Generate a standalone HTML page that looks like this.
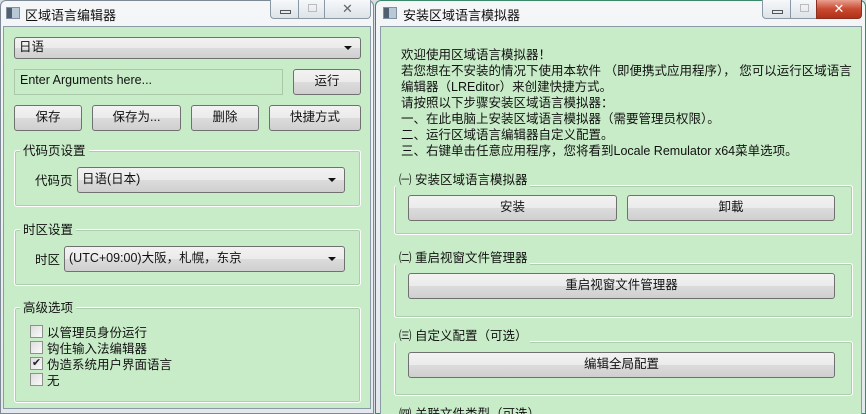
<!DOCTYPE html>
<html><head><meta charset="utf-8"><style>
*{box-sizing:border-box;margin:0;padding:0}
html,body{width:866px;height:414px;overflow:hidden}
body{background:#d8dde4;position:relative;font-family:"Liberation Sans","Noto Sans CJK SC",sans-serif;font-size:12.5px;color:#111}
#wrap{position:absolute;left:0;top:0;width:866px;height:414px;overflow:hidden}
.a{position:absolute}
.win{position:absolute;background:linear-gradient(#f4f6f8,#e4e8ec);border:1px solid #7d8a96;border-radius:6px 6px 0 0}
.client{position:absolute;background:#c8ecc8;border:1px solid #8a9aa6}
.title{position:absolute;top:5px;font-size:13px;white-space:nowrap}
.ico{position:absolute;top:7px;width:14px;height:12px;background:linear-gradient(90deg,#506070 0 40%,#b8c8d4 40%);border:1px solid #8090a0}
.btn{position:absolute;border:1px solid #707070;border-radius:3px;background:linear-gradient(#f2f2f2 0,#ebebeb 50%,#dcdcdc 50%,#cfcfcf 100%);text-align:center;white-space:nowrap}
.combo{position:absolute;border:1px solid #707070;border-radius:3px;background:linear-gradient(#f2f2f2 0,#ebebeb 50%,#dcdcdc 50%,#cfcfcf 100%);padding-left:4px;white-space:nowrap}
.combo:after{content:"";position:absolute;right:8px;top:50%;margin-top:-2px;border-left:4px solid transparent;border-right:4px solid transparent;border-top:4px solid #111}
.grp{position:absolute;border:1px solid #fff;border-radius:3px;box-shadow:inset 0 0 0 1px #b0ccb0}
.gl{position:absolute;background:#c8ecc8;padding:0 3px;white-space:nowrap}
.cb{position:absolute;width:13px;height:13px;border:1px solid #8f8f8f;background:linear-gradient(135deg,#ddd,#fafafa)}
.t{position:absolute;white-space:nowrap}
.cap{position:absolute;top:0;height:19px;border:1px solid #8a97a4;border-top:none;background:linear-gradient(#f6f8fa,#dde3e9)}
</style></head><body><div id="wrap">
<!-- left window -->
<div class="win" style="left:0;top:0;width:374px;height:414px"></div>
<div class="ico" style="left:6px"></div>
<div class="title" style="left:25px">区域语言编辑器</div>
<div class="cap" style="left:270px;width:29px;border-radius:0 0 0 4px"><div class="a" style="left:9px;top:10px;width:11px;height:4px;border:1px solid #555"></div></div>
<div class="cap" style="left:298px;width:27px"><div class="a" style="left:9px;top:4px;width:9px;height:8px;border:1px solid #bbb"></div></div>
<div class="cap" style="left:324px;width:47px;border-radius:0 0 4px 0;text-align:center;color:#666;font-size:13px;line-height:18px">✕</div>
<div class="client" style="left:3px;top:26px;width:368px;height:383px"></div>
<div class="combo" style="left:14px;top:37px;width:347px;height:22px;line-height:19px">日语</div>
<div class="a" style="left:14px;top:69px;width:269px;height:26px;border:1px solid #a8c8a8;padding:3px 5px;font-size:12.5px">Enter Arguments here...</div>
<div class="btn" style="left:293px;top:69px;width:68px;height:26px;line-height:23px">运行</div>
<div class="btn" style="left:14px;top:105px;width:68px;height:26px;line-height:23px">保存</div>
<div class="btn" style="left:92px;top:105px;width:89px;height:26px;line-height:23px">保存为...</div>
<div class="btn" style="left:191px;top:105px;width:68px;height:26px;line-height:23px">删除</div>
<div class="btn" style="left:269px;top:105px;width:92px;height:26px;line-height:23px">快捷方式</div>
<div class="grp" style="left:14px;top:150px;width:347px;height:57px"></div>
<div class="gl" style="left:20px;top:140px">代码页设置</div>
<div class="t" style="left:35px;top:170px">代码页</div>
<div class="combo" style="left:77px;top:167px;width:268px;height:26px;line-height:23px">日语(日本)</div>
<div class="grp" style="left:14px;top:229px;width:347px;height:57px"></div>
<div class="gl" style="left:20px;top:219px">时区设置</div>
<div class="t" style="left:35px;top:249px">时区</div>
<div class="combo" style="left:64px;top:246px;width:281px;height:26px;line-height:23px">(UTC+09:00)大阪，札幌，东京</div>
<div class="grp" style="left:14px;top:307px;width:347px;height:96px"></div>
<div class="gl" style="left:20px;top:297px">高级选项</div>
<div class="cb" style="left:30px;top:325px"></div><div class="t" style="left:47px;top:322px">以管理员身份运行</div>
<div class="cb" style="left:30px;top:341px"></div><div class="t" style="left:47px;top:338px">钩住输入法编辑器</div>
<div class="cb" style="left:30px;top:357px;font-size:11px;line-height:11px;text-align:center;color:#223">✔</div><div class="t" style="left:47px;top:354px">伪造系统用户界面语言</div>
<div class="cb" style="left:30px;top:373px"></div><div class="t" style="left:47px;top:370px">无</div>
<!-- right window -->
<div class="win" style="left:375px;top:0;width:491px;height:414px;border-color:#3a8a6a"></div>
<div class="ico" style="left:383px"></div>
<div class="title" style="left:403px">安装区域语言模拟器</div>
<div class="cap" style="left:762px;width:29px;border-radius:0 0 0 4px"><div class="a" style="left:9px;top:10px;width:11px;height:4px;border:1px solid #555"></div></div>
<div class="cap" style="left:790px;width:27px"><div class="a" style="left:9px;top:4px;width:9px;height:8px;border:1px solid #bbb"></div></div>
<div class="cap" style="left:816px;width:46px;border-radius:0 0 4px 0;background:linear-gradient(#e8a090,#c84a30 50%,#b03018);color:#fff;text-align:center;font-size:13px;line-height:18px;border-color:#8a3020">✕</div>
<div class="client" style="left:380px;top:26px;width:482px;height:392px"></div>
<div class="t" style="left:401px;top:47px;line-height:16px">欢迎使用区域语言模拟器！<br>若您想在不安装的情况下使用本软件 （即便携式应用程序）， 您可以运行区域语言<br>编辑器（LREditor）来创建快捷方式。<br>请按照以下步骤安装区域语言模拟器：<br>一、在此电脑上安装区域语言模拟器（需要管理员权限）。<br>二、运行区域语言编辑器自定义配置。<br>三、右键单击任意应用程序，您将看到Locale Remulator x64菜单选项。</div>
<div class="grp" style="left:394px;top:185px;width:459px;height:50px"></div>
<div class="gl" style="left:396px;top:169px">㈠ 安装区域语言模拟器</div>
<div class="btn" style="left:408px;top:195px;width:209px;height:26px;line-height:23px">安装</div>
<div class="btn" style="left:627px;top:195px;width:208px;height:26px;line-height:23px">卸載</div>
<div class="grp" style="left:394px;top:263px;width:459px;height:55px"></div>
<div class="gl" style="left:396px;top:247px">㈡ 重启视窗文件管理器</div>
<div class="btn" style="left:408px;top:273px;width:427px;height:26px;line-height:23px">重启视窗文件管理器</div>
<div class="grp" style="left:394px;top:341px;width:459px;height:55px"></div>
<div class="gl" style="left:396px;top:325px">㈢ 自定义配置（可选）</div>
<div class="btn" style="left:408px;top:352px;width:427px;height:26px;line-height:23px">编辑全局配置</div>
<div class="gl" style="left:396px;top:403px">㈣ 关联文件类型（可选）</div>
</div></body></html>
